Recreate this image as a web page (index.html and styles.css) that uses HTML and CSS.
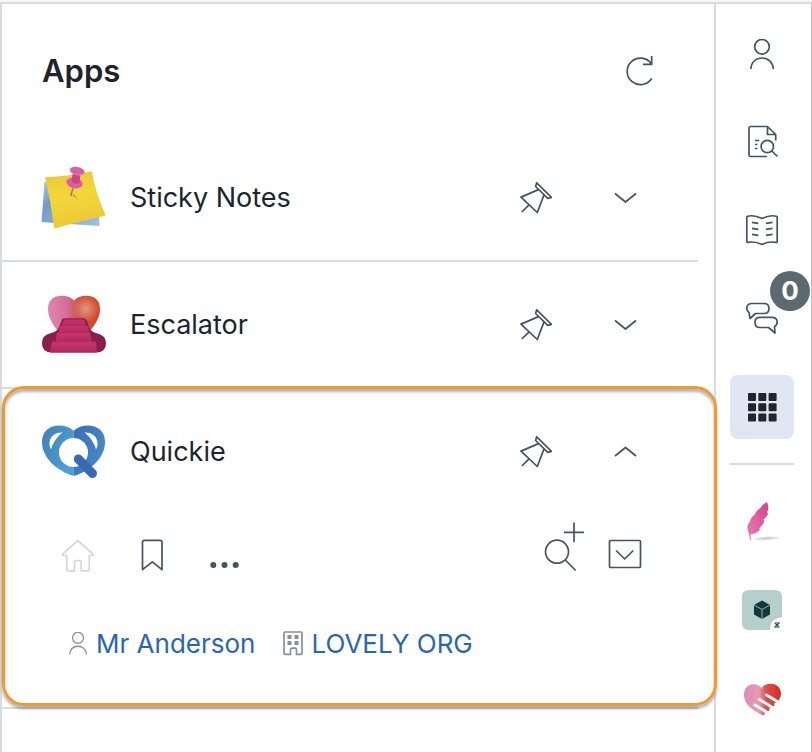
FILE: index.html
```html
<!DOCTYPE html>
<html lang="en">
  <head>
    <meta charset="UTF-8" />
    <meta name="viewport" content="width=device-width, initial-scale=1.0" />
    <title>Apps</title>
    <link rel="stylesheet" href="styles.css">
  </head>
  <body>
    <svg class="sprite" aria-hidden="true">
      <symbol id="pin" viewBox="0 0 32 32">
        <path d="M16.7 .8 31.5 15.400 27.8 16.3 15.6 4.5ZM18.5 7.6 1 15.1 17.3 30.500 23.8 13.4M9.3 22.6 1.8 30" />
      </symbol>
      <symbol id="down" viewBox="0 0 32 32">
        <path d="M5 11.5 15.5 20 26 11.5" />
      </symbol>
      <symbol id="up" viewBox="0 0 32 32">
        <path d="M5 20 15.5 11.5 26 20" />
      </symbol>
      <symbol id="person" viewBox="0 0 32 32">
        <circle cx="16" cy="7.8" r="7.3" />
        <path d="M4.8 30C5.5 23 10 19 16 19S26.700 23 27.400 30" />
      </symbol>
    </svg>

    <div class="workspace">
      <main class="apps">
        <header class="apps-header">
          <h1>Apps</h1>
          <button type="button" class="refresh" aria-label="Refresh">
            <svg class="icon" viewBox="0 0 32 32">
              <path d="M27.700 23.500A13.300 13.300 0 1 1 27 8.200M27.700 1V9.300H19" />
            </svg>
          </button>
        </header>

        <ul class="app-list">
          <li class="app">
            <div class="app-row">
              <svg class="logo" viewBox="0 0 64 64" aria-hidden="true">
                <defs>
                  <linearGradient id="noteFill" x1="0" y1="0" x2="0.2" y2="1">
                    <stop offset="0" stop-color="#e9c73a" />
                    <stop offset="0.5" stop-color="#f4d63c" />
                    <stop offset="1" stop-color="#edc834" />
                  </linearGradient>
                  <linearGradient id="noteBack" x1="0" y1="0" x2="1" y2="1">
                    <stop offset="0" stop-color="#a9c8ee" />
                    <stop offset="0.3" stop-color="#7599c8" />
                    <stop offset="1" stop-color="#9dc1ec" />
                  </linearGradient>
                </defs>
                <path d="M2.500 16 -.500 56 12 57 57.500 60 57 48 10 16Z" fill="url(#noteBack)" />
                <path d="M3 11.300Q27 10 49.700 5.200 54 28 63.700 49.500 38 55 12.300 62.500 9 36 3 11.300Z" fill="url(#noteFill)" />
                <path d="M30 29 36 34 32 28Z" fill="#b09625" opacity="0.7" />
                <path d="M31 22 28.800 30" stroke="#8c8758" stroke-width="1.500" />
                <ellipse cx="32.500" cy="17" rx="8.200" ry="5.200" transform="rotate(12 32.500 17)" fill="#d95f9f" />
                <path d="M31 6 29.500 15Q32 19 37.500 17L38.500 7Z" fill="#c64487" />
                <ellipse cx="35.200" cy="5" rx="7.800" ry="4.200" transform="rotate(12 35.200 5)" fill="#e58ab9" />
                <ellipse cx="35.400" cy="4.800" rx="7" ry="3.500" transform="rotate(12 35.400 4.800)" fill="#d9609f" />
              </svg>
              <h2>Sticky Notes</h2>
              <button type="button" class="row-button" aria-label="Pin Sticky Notes"><svg class="icon"><use href="#pin" /></svg></button>
              <button type="button" class="row-button" aria-label="Expand Sticky Notes"><svg class="icon"><use href="#down" /></svg></button>
            </div>
          </li>

          <li class="app">
            <div class="app-row">
              <svg class="logo" viewBox="0 0 64 64" aria-hidden="true">
                <defs>
                  <linearGradient id="heartFill" x1="0" y1="0" x2="1" y2="0">
                    <stop offset="0" stop-color="#dc86b4" />
                    <stop offset="0.35" stop-color="#d76f98" />
                    <stop offset="0.6" stop-color="#cf5043" />
                    <stop offset="1" stop-color="#d84423" />
                  </linearGradient>
                  <radialGradient id="heartGlow" cx="0.5" cy="0.5" r="0.5">
                    <stop offset="0" stop-color="#e19a7c" />
                    <stop offset="1" stop-color="#e19a7c" stop-opacity="0" />
                  </radialGradient>
                  <linearGradient id="stairFill" x1="0" y1="0" x2="0" y2="1">
                    <stop offset="0" stop-color="#cb336d" />
                    <stop offset="1" stop-color="#ab2b5b" />
                  </linearGradient>
                </defs>
                <path d="M32 7.700C27 1 6 -1 6 16 6 30 19 42 32 51 45 42 58 30 58 16 58 -1 37 1 32 7.700Z" fill="url(#heartFill)" />
                <circle cx="44" cy="16" r="13" fill="url(#heartGlow)" />
                <path d="M22 25.300H42Q44 25.300 45 28L47 34Q49 39 54 40 64 42 64 50.500 64 59.500 54 59.500H10Q0 59.500 0 50.500 0 42 9 40 15 39 17 34L19.500 28Q20 25.300 22 25.300Z" fill="#8a1d4d" />
                <path d="M22 26.500H42L44.500 33H19.500Z" fill="url(#stairFill)" />
                <path d="M18 33H46L47.500 40H16Z" fill="url(#stairFill)" />
                <path d="M15 40H48L50 49H13.500Z" fill="url(#stairFill)" />
                <path d="M10 48.800H54L55 59.500H8Z" fill="url(#stairFill)" />
              </svg>
              <h2>Escalator</h2>
              <button type="button" class="row-button" aria-label="Pin Escalator"><svg class="icon"><use href="#pin" /></svg></button>
              <button type="button" class="row-button" aria-label="Expand Escalator"><svg class="icon"><use href="#down" /></svg></button>
            </div>
          </li>

          <li class="app highlighted">
            <div class="app-row">
              <svg class="logo" viewBox="0 0 64 64" aria-hidden="true">
                <defs>
                  <linearGradient id="quickLeft" x1="0" y1="0" x2="1" y2="0.6">
                    <stop offset="0" stop-color="#3f7fb4" />
                    <stop offset="1" stop-color="#4f9fd6" />
                  </linearGradient>
                  <linearGradient id="quickRight" x1="0" y1="0" x2="1" y2="0.5">
                    <stop offset="0" stop-color="#3a6eb4" />
                    <stop offset="1" stop-color="#4489c8" />
                  </linearGradient>
                </defs>
                <path d="M31.700 10.700C22 2 0 3 0 22 0 38 15 51 31.700 56Z" fill="url(#quickLeft)" />
                <path d="M31.700 10.700C41 2 63 3 63 22 63 38 48 51 31.700 56Z" fill="url(#quickRight)" />
                <circle cx="31.500" cy="32.500" r="14.500" fill="#fff" />
                <path d="M20.500 12.500Q11 12 8 20 6.500 25 9 29.500 12 19 20.500 12.500Z" fill="#fff" />
                <path d="M42.500 12.500Q52 12 55 20 56.500 25 54 29.500 51 19 42.500 12.500Z" fill="#fff" />
                <path d="M36.300 39 50.500 53.500" stroke="#3a68b4" stroke-width="9" stroke-linecap="round" />
              </svg>
              <h2>Quickie</h2>
              <button type="button" class="row-button" aria-label="Pin Quickie"><svg class="icon"><use href="#pin" /></svg></button>
              <button type="button" class="row-button" aria-label="Collapse Quickie"><svg class="icon"><use href="#up" /></svg></button>
            </div>

            <div class="app-body">
              <div class="toolbar">
                <button type="button" aria-label="Home" disabled>
                  <svg class="icon" viewBox="0 0 32 32">
                    <path d="M15.700 1.300 .500 15.300Q.300 16.500 1.500 16.500H4.700V30Q4.700 31.800 6.500 31.800H12.500V23.500Q12.500 21.500 14.500 21.500H17.200Q19.200 21.500 19.200 23.500V31.800H25.500Q27.300 31.800 27.300 30V16.500H30Q31.500 16.500 31.200 15.300Z" />
                  </svg>
                </button>
                <button type="button" aria-label="Bookmark">
                  <svg class="icon" viewBox="0 0 32 32">
                    <path d="M6.500 30.700V3.300Q6.500 1.300 8.500 1.300H24Q26 1.300 26 3.300V30.700L16.300 22.800Z" />
                  </svg>
                </button>
                <button type="button" aria-label="More">
                  <svg class="icon solid" viewBox="0 0 32 32">
                    <circle cx="3.300" cy="26" r="3" />
                    <circle cx="14.500" cy="26" r="3" />
                    <circle cx="25.700" cy="26" r="3" />
                  </svg>
                </button>
                <button type="button" class="search-add" aria-label="Add search">
                  <svg class="icon tall" viewBox="0 0 32 48">
                    <circle cx="13" cy="28.700" r="11.500" />
                    <path d="M21.300 37 31.700 47.500M20 9.300H40M30 -.500V19.300" />
                  </svg>
                </button>
                <button type="button" aria-label="Options">
                  <svg class="icon" viewBox="0 0 32 32">
                    <rect x="0.500" y="1.500" width="31" height="27" rx="1" />
                    <path d="M7 11.500 15.700 20 24.300 11.500" />
                  </svg>
                </button>
              </div>
              <div class="records">
                <a href="#">
                  <svg class="icon small"><use href="#person" /></svg>
                  Mr Anderson
                </a>
                <a href="#">
                  <svg class="icon small" viewBox="0 0 24 24">
                    <path d="M4 0H20Q21 0 21 1V21.200Q21 22.400 20 22.400H15.500V17.700Q15.500 16.200 14 16.200H11Q9.500 16.200 9.500 17.700V22.400H4Q3 22.400 3 21.200V1Q3 0 4 0Z" />
                    <path d="M6.500 5H10.500M13.500 5H17.500M6.500 11H10.500M13.500 11H17.500" stroke-width="4" />
                  </svg>
                  LOVELY ORG
                </a>
              </div>
            </div>
          </li>
        </ul>
      </main>

      <nav class="rail" aria-label="Context">
        <button type="button" aria-label="User"><svg class="icon"><use href="#person" /></svg></button>
        <button type="button" aria-label="Search documents">
          <svg class="icon" viewBox="0 1.500 32 32">
            <path d="M21 31H4.500Q3 31 3 29.500V2.500Q3 1 4.500 1H21.500L29.700 9V15M21.500 1V9H29.700M9 15H13.300M9 19H11.500M9 23H11.500M25.800 25.500 31.500 31" />
            <circle cx="21.300" cy="21" r="6.200" />
          </svg>
        </button>
        <button type="button" aria-label="Knowledge">
          <svg class="icon" viewBox="0 1 32 32">
            <path d="M16 4.500Q8 .500 1.500 2.300 .800 2.500 .800 3.300V27.500Q.800 28.600 2 28.400 9 27 16 30.500 23 27 30 28.400 31.200 28.600 31.200 27.500V3.300Q31.200 2.500 30.500 2.300 24 .500 16 4.500ZM6 8.300 12.300 9.300M6 14.300 12.300 15.300M6 20.300 12.300 21.300M26.500 8.300 20 9.300M26.500 14.300 20 15.300M26.500 20.300 20 21.300" />
          </svg>
        </button>
        <button type="button" aria-label="Conversations, 0 open">
          <svg class="icon" viewBox="0 0 32 32">
            <path d="M9.500 10.500 4 15.500 3 9.500Q.800 8 .800 5.500 .800 .500 6 .500H18Q23 .500 23 5.500T18 10.500ZM22.500 24.500 29 30 28.500 23.500Q31.200 22 31.200 19.300 31.200 14.300 26 14.300H14Q9 14.300 9 19.400T14 24.500Z" />
          </svg>
          <span class="badge">0</span>
        </button>
        <button type="button" class="active" aria-label="Apps" aria-pressed="true">
          <svg class="icon squares" viewBox="0 0 32 32">
            <path d="M3 3h6v6h-6ZM13.300 3h6v6h-6ZM23.600 3h6v6h-6ZM3 13.200h6v6h-6ZM13.300 13.200h6v6h-6ZM23.600 13.200h6v6h-6ZM3 23.400h6v6h-6ZM13.300 23.400h6v6h-6ZM23.600 23.400h6v6h-6Z" />
          </svg>
        </button>
        <hr />
        <button type="button" aria-label="Feather">
          <svg class="rail-logo" viewBox="0 0 40 40">
            <defs>
              <radialGradient id="featherShade">
                <stop offset="0" stop-color="#d3b9c7" />
                <stop offset="1" stop-color="#d3b9c7" stop-opacity="0.200" />
              </radialGradient>
              <linearGradient id="featherFill" x1="1" y1="0" x2="0" y2="1">
                <stop offset="0" stop-color="#cf4489" />
                <stop offset="0.500" stop-color="#e0609f" />
                <stop offset="1" stop-color="#e383b3" />
              </linearGradient>
            </defs>
            <ellipse cx="24.500" cy="37.300" rx="13.500" ry="2" transform="rotate(-3 24.500 37.300)" fill="url(#featherShade)" />
            <path d="M24.500 1Q20 4 18.500 7 14 9.500 12.500 14 8.500 16.500 8 20.500 4.500 24 5.500 28 6 31 7 33L8 39.500 9 38.500 8.500 33.500Q15 32.500 18.500 28L17 27.500Q22 23.500 22.300 19.500L21 19Q26 14.500 26 12L25 11.500Q28 5 24.500 1Z" fill="url(#featherFill)" />
          </svg>
        </button>
        <button type="button" aria-label="Cube">
          <svg class="rail-logo" viewBox="0 0 40 40">
            <path d="M7 1H33Q40 1 40 8V28.500Q28 29 28 41H7Q0 41 0 34V8Q0 1 7 1Z" fill="#b5cfcb" />
            <path d="M20 11.500 28 16V25.500L20 30 12 25.500V16Z" fill="#14363d" />
            <path d="M12 16 20 20.500 28 16M20 20.500V30" stroke="#8fb0ae" fill="none" />
            <path d="M32.500 34H37.500L32.500 38H37.500M33 34.500 37 37.500" stroke="#14363d" fill="none" />
          </svg>
        </button>
        <button type="button" aria-label="Helping heart">
          <svg class="rail-logo" viewBox="0 0 40 40">
            <defs>
              <linearGradient id="careFill" x1="0" y1="0" x2="1" y2="0">
                <stop offset="0" stop-color="#e08bb9" />
                <stop offset="0.400" stop-color="#e79ab0" />
                <stop offset="0.600" stop-color="#dd4e4a" />
                <stop offset="1" stop-color="#d62b20" />
              </linearGradient>
            </defs>
            <path d="M19.500 11C15 5 2 5.500 2 18 2 28 12 34 21 38.500L23 37.500 22 35.500 27 34 27.500 31.500 32.500 29 32 26.500 36.500 24Q39 20 39 17C39 4.500 23 4.500 19.500 11Z" fill="url(#careFill)" />
            <path d="M24.500 18 37 25.500M17.500 22.500 32 31.500M13 28 27 36.500" stroke="#fff" stroke-width="3" stroke-linecap="round" />
          </svg>
        </button>
      </nav>
    </div>
  </body>
</html>
```
FILE: styles.css
```css
* {
  box-sizing: border-box;
}
body {
  margin: 0;
  padding-top: 2px;
  background-color: #f6f8fa;
  color: #1c252d;
  font-family: Inter, "Liberation Sans", sans-serif;
  font-size: 26px;
  line-height: 32px;
}
h1,
h2 {
  margin: 0;
  font-size: 27px;
  font-weight: 400;
}
button {
  position: relative;
  display: flex;
  align-items: center;
  justify-content: center;
  padding: 0;
  border: none;
  border-radius: 8px;
  background: none;
  color: #46545f;
  font: inherit;
  cursor: pointer;
}
button:disabled {
  color: #d5d6d7;
  cursor: default;
}
.sprite {
  position: absolute;
  width: 0;
  height: 0;
}
.icon {
  display: block;
  width: 32px;
  height: 32px;
  fill: none;
  stroke: currentColor;
  stroke-width: 1.7;
  stroke-linejoin: round;
  overflow: visible;
}
.icon.solid {
  fill: currentColor;
  stroke: none;
}
/* the stroke rounds the corners of each square */
.icon.squares {
  fill: currentColor;
  stroke-width: 2;
}
.icon.tall {
  height: 48px;
}
.icon.small {
  width: 24px;
  height: 24px;
  color: #8a9097;
}

.workspace {
  display: flex;
  min-height: calc(100vh - 2px);
  border: 2px solid #d8dcde;
  border-right: 1px solid #bfc1c2;
  border-bottom: none;
  background-color: #fff;
}
.apps {
  flex: 1;
  padding-right: 16px;
}
.apps-header {
  display: flex;
  align-items: center;
  justify-content: space-between;
  height: 131px;
  padding: 2px 42px 0 40px;
}
.apps-header h1 {
  font-size: 31px;
  font-weight: 600;
}

/* app list */
.app-list {
  margin: 0;
  padding: 0;
  list-style: none;
}
.app {
  position: relative;
  border-bottom: 2px solid #d8dcde;
}
.app-row {
  display: flex;
  align-items: center;
  height: 125px;
  padding: 0 40px;
}
.logo {
  width: 64px;
  height: 64px;
  margin-right: 24px;
  overflow: visible;
}
.app-row h2 {
  flex: 1;
}
.row-button {
  width: 64px;
  height: 64px;
}
.row-button + .row-button {
  margin-left: 26px;
}
.highlighted::after {
  content: "";
  position: absolute;
  inset: -3px -19px 1px 0;
  border: 3px solid #ef9a31;
  border-radius: 22px;
  box-shadow: 0 3px 3px rgba(0, 0, 0, 0.3), inset 0 3px 3px rgba(0, 0, 0, 0.3);
  pointer-events: none;
}
.app-body {
  padding: 9px 0 47px;
}
.toolbar {
  display: flex;
  align-items: flex-end;
  gap: 42px;
  padding: 0 57px 0 60px;
}
.search-add {
  margin-left: auto;
  margin-right: -9px;
}
.records {
  display: flex;
  gap: 26px;
  margin-top: 57px;
  padding: 0 64px;
}
.records a {
  display: flex;
  align-items: center;
  gap: 6px;
  color: #2a66b0;
  text-decoration: none;
}

/* right rail */
.rail {
  display: flex;
  flex-direction: column;
  gap: 24px;
  padding: 19px 17px 19px 14px;
  border-left: 2px solid #d8dcde;
}
.rail button {
  width: 64px;
  height: 64px;
}
.rail .active {
  background-color: #e0e7f3;
  color: #20262e;
}
.rail hr {
  width: 100%;
  height: 2px;
  margin: 0;
  border: none;
  background-color: #d8dcde;
}
.rail-logo {
  width: 40px;
  height: 40px;
  overflow: visible;
}
.badge {
  position: absolute;
  top: -16px;
  right: -16px;
  width: 40px;
  border-radius: 50%;
  background-color: #5c6970;
  color: #fff;
  font-weight: 700;
  line-height: 40px;
  text-align: center;
}
```
